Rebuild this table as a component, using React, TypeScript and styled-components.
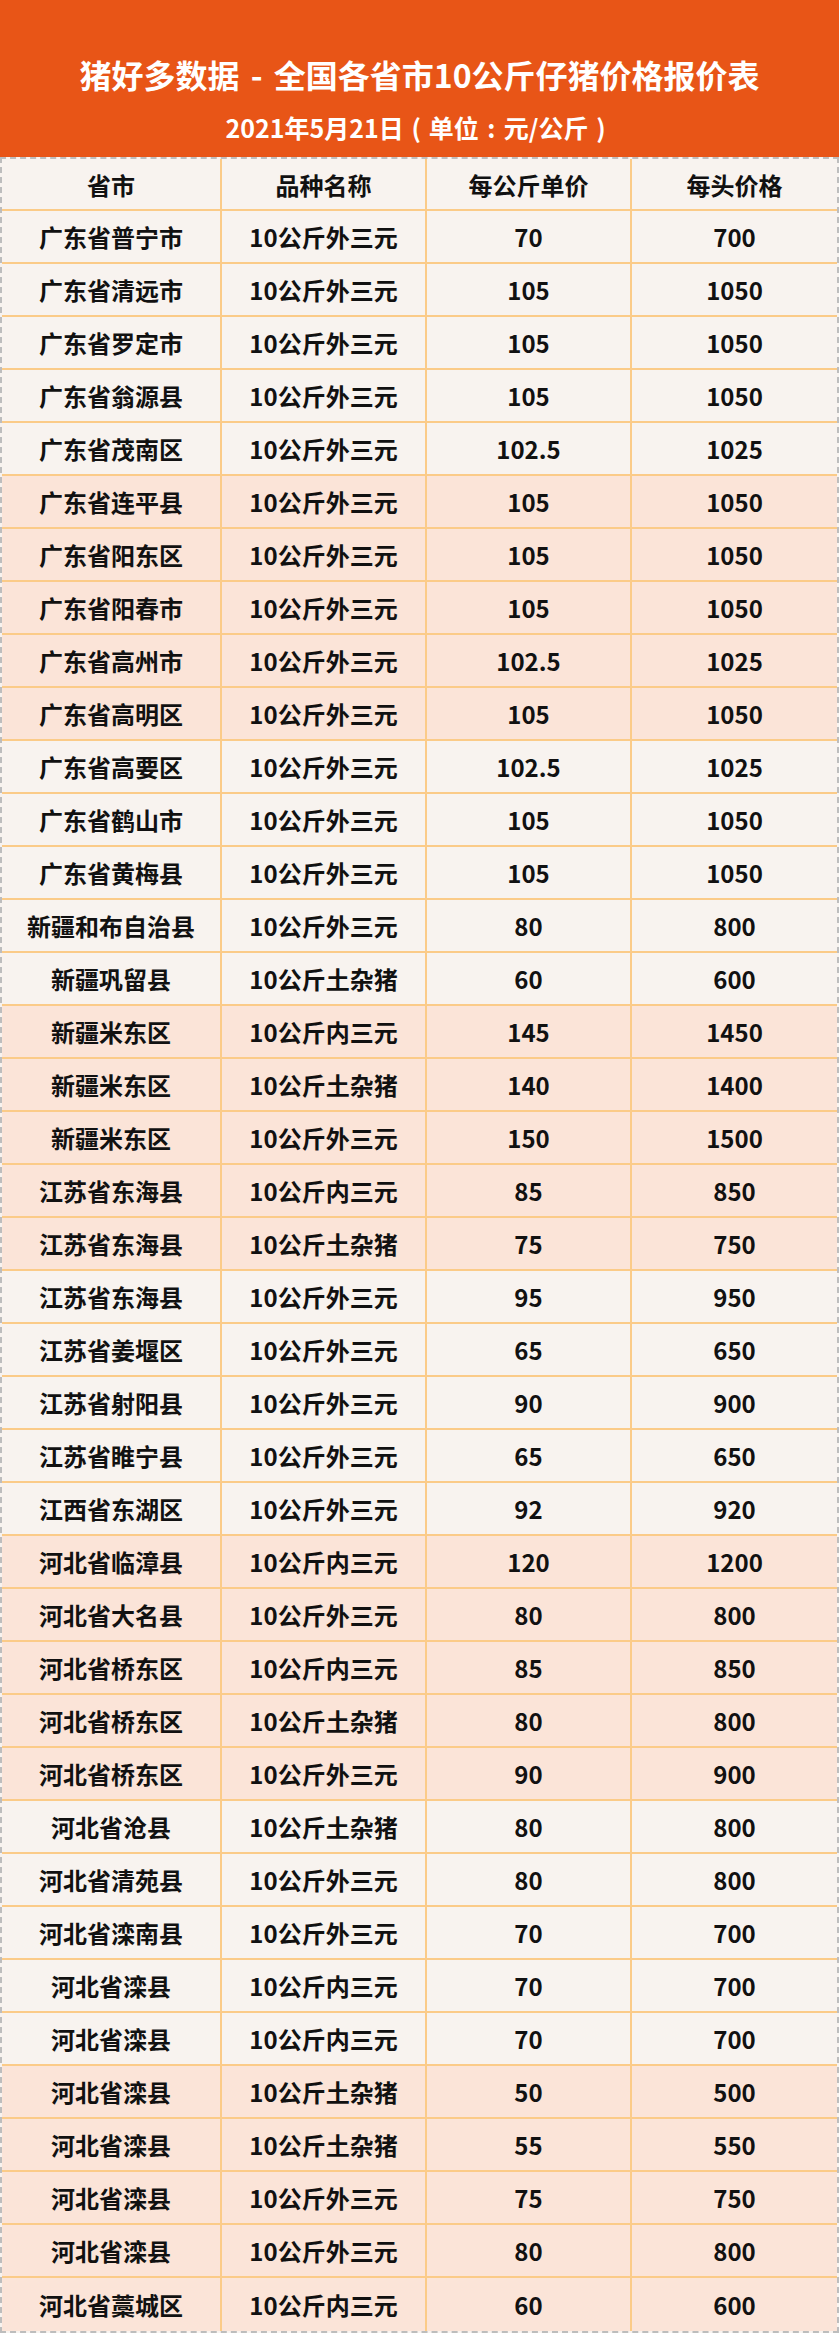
import React from 'react';
import styled, { createGlobalStyle } from 'styled-components';

interface PriceRow {
  region: string;
  kind: string;
  unit: string;
  head: string;
}

const rows: PriceRow[] = [
  { region: '广东省普宁市', kind: '10公斤外三元', unit: '70', head: '700' },
  { region: '广东省清远市', kind: '10公斤外三元', unit: '105', head: '1050' },
  { region: '广东省罗定市', kind: '10公斤外三元', unit: '105', head: '1050' },
  { region: '广东省翁源县', kind: '10公斤外三元', unit: '105', head: '1050' },
  { region: '广东省茂南区', kind: '10公斤外三元', unit: '102.5', head: '1025' },
  { region: '广东省连平县', kind: '10公斤外三元', unit: '105', head: '1050' },
  { region: '广东省阳东区', kind: '10公斤外三元', unit: '105', head: '1050' },
  { region: '广东省阳春市', kind: '10公斤外三元', unit: '105', head: '1050' },
  { region: '广东省高州市', kind: '10公斤外三元', unit: '102.5', head: '1025' },
  { region: '广东省高明区', kind: '10公斤外三元', unit: '105', head: '1050' },
  { region: '广东省高要区', kind: '10公斤外三元', unit: '102.5', head: '1025' },
  { region: '广东省鹤山市', kind: '10公斤外三元', unit: '105', head: '1050' },
  { region: '广东省黄梅县', kind: '10公斤外三元', unit: '105', head: '1050' },
  { region: '新疆和布自治县', kind: '10公斤外三元', unit: '80', head: '800' },
  { region: '新疆巩留县', kind: '10公斤土杂猪', unit: '60', head: '600' },
  { region: '新疆米东区', kind: '10公斤内三元', unit: '145', head: '1450' },
  { region: '新疆米东区', kind: '10公斤土杂猪', unit: '140', head: '1400' },
  { region: '新疆米东区', kind: '10公斤外三元', unit: '150', head: '1500' },
  { region: '江苏省东海县', kind: '10公斤内三元', unit: '85', head: '850' },
  { region: '江苏省东海县', kind: '10公斤土杂猪', unit: '75', head: '750' },
  { region: '江苏省东海县', kind: '10公斤外三元', unit: '95', head: '950' },
  { region: '江苏省姜堰区', kind: '10公斤外三元', unit: '65', head: '650' },
  { region: '江苏省射阳县', kind: '10公斤外三元', unit: '90', head: '900' },
  { region: '江苏省睢宁县', kind: '10公斤外三元', unit: '65', head: '650' },
  { region: '江西省东湖区', kind: '10公斤外三元', unit: '92', head: '920' },
  { region: '河北省临漳县', kind: '10公斤内三元', unit: '120', head: '1200' },
  { region: '河北省大名县', kind: '10公斤外三元', unit: '80', head: '800' },
  { region: '河北省桥东区', kind: '10公斤内三元', unit: '85', head: '850' },
  { region: '河北省桥东区', kind: '10公斤土杂猪', unit: '80', head: '800' },
  { region: '河北省桥东区', kind: '10公斤外三元', unit: '90', head: '900' },
  { region: '河北省沧县', kind: '10公斤土杂猪', unit: '80', head: '800' },
  { region: '河北省清苑县', kind: '10公斤外三元', unit: '80', head: '800' },
  { region: '河北省滦南县', kind: '10公斤外三元', unit: '70', head: '700' },
  { region: '河北省滦县', kind: '10公斤内三元', unit: '70', head: '700' },
  { region: '河北省滦县', kind: '10公斤内三元', unit: '70', head: '700' },
  { region: '河北省滦县', kind: '10公斤土杂猪', unit: '50', head: '500' },
  { region: '河北省滦县', kind: '10公斤土杂猪', unit: '55', head: '550' },
  { region: '河北省滦县', kind: '10公斤外三元', unit: '75', head: '750' },
  { region: '河北省滦县', kind: '10公斤外三元', unit: '80', head: '800' },
  { region: '河北省藁城区', kind: '10公斤内三元', unit: '60', head: '600' },
];

const GlobalStyle = createGlobalStyle`
  body {
    margin: 0;
    background: #ffffff;
    font-family: "Noto Sans CJK SC", "Noto Sans", sans-serif;
  }
`;

// Styled Components
const Page = styled.div`
  width: 839px;
`;

const Banner = styled.header`
  height: 157px;
  box-sizing: border-box;
  background-color: #e85517;
  display: flex;
  flex-direction: column;
  align-items: center;
  padding-top: 50px;
  color: #ffffff;
  font-weight: 700;
`;

const Title = styled.h1`
  margin: 0;
  font-size: 32px;
  line-height: 48px;
  font-weight: 700;
  word-spacing: 4px;
`;

const Subtitle = styled.div`
  margin-top: 11px;
  font-size: 25px;
  line-height: 36px;
  white-space: nowrap;
`;

// full-width punctuation drawn centred in its em box, as in the picture
const Punct = styled.span`
  display: inline-block;
  width: 1em;
  text-align: center;
`;

const Table = styled.div`
  border: 2px dashed #bdbdbd;
  background-color: #f8f3ef;
`;

const Row = styled.div<{ $tone?: 'light' | 'pink'; $last?: boolean; $height?: number }>`
  display: grid;
  grid-template-columns: 220px 205px 205px 1fr;
  height: ${({ $height }) => $height || 53}px;
  box-sizing: border-box;
  background-color: ${({ $tone }) => ($tone === 'pink' ? '#fbe4d8' : '#f8f3ef')};
  border-bottom: ${({ $last }) => ($last ? 'none' : '2px solid #fbcb88')};
`;

const Cell = styled.div`
  display: flex;
  align-items: center;
  justify-content: center;
  font-size: 24px;
  font-weight: 700;
  color: #111111;
  white-space: nowrap;
  border-right: 2px solid #fbcb88;

  &:last-child {
    border-right: none;
  }
`;

const App: React.FC = () => {
  return (
    <Page>
      <GlobalStyle />
      <Banner>
        <Title>猪好多数据 - 全国各省市10公斤仔猪价格报价表</Title>
        <Subtitle>
          2021年5月21日<Punct>(</Punct>单位<Punct>:</Punct>元/公斤<Punct>)</Punct>
        </Subtitle>
      </Banner>
      <Table>
        <Row $height={52}>
          <Cell>省市</Cell>
          <Cell>品种名称</Cell>
          <Cell>每公斤单价</Cell>
          <Cell>每头价格</Cell>
        </Row>
        {rows.map((row, i) => (
          <Row
            key={i}
            $tone={Math.floor(i / 5) % 2 === 1 ? 'pink' : 'light'}
            $last={i === rows.length - 1}
          >
            <Cell>{row.region}</Cell>
            <Cell>{row.kind}</Cell>
            <Cell>{row.unit}</Cell>
            <Cell>{row.head}</Cell>
          </Row>
        ))}
      </Table>
    </Page>
  );
};

export default App;
